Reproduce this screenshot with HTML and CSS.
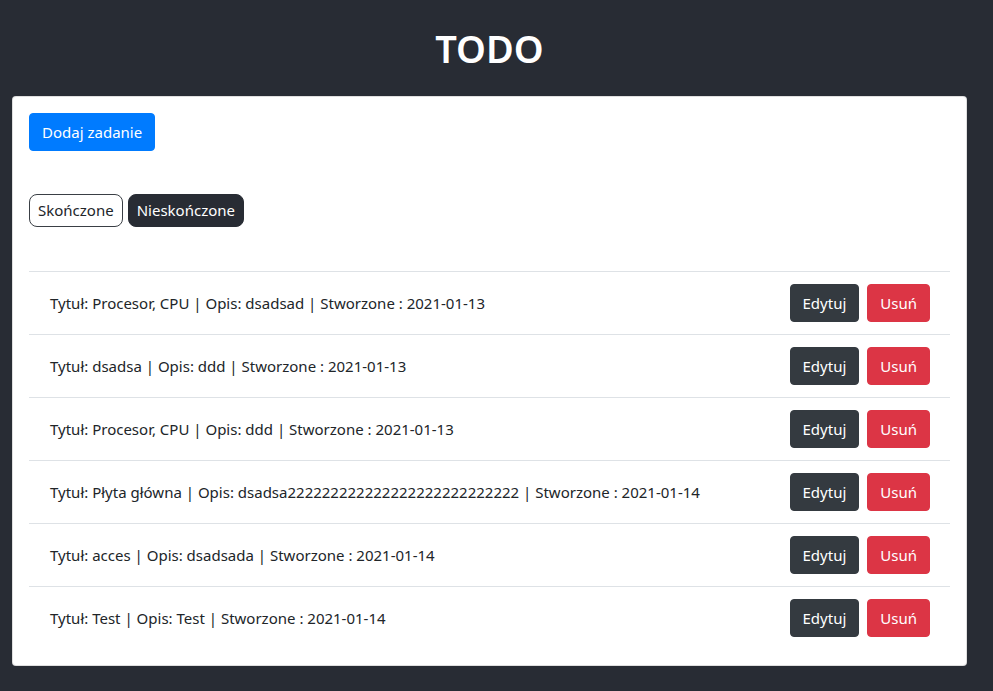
FILE: index.html
```html
<!DOCTYPE html>
<html lang="pl">
<head>
<meta charset="utf-8">
<title>TODO</title>
<link rel="stylesheet" href="styles.css">
</head>
<body>
<div class="app">
  <h1 class="title">TODO</h1>
  <div class="card">
    <div><button class="btn btn-primary">Dodaj zadanie</button></div>
    <div class="filters">
      <button class="pill pill-outline">Skończone</button>
      <button class="pill pill-dark">Nieskończone</button>
    </div>
    <ul class="list">
      <li class="row"><span class="text">Tytuł: Procesor, CPU | Opis: dsadsad | Stworzone : 2021-01-13</span><span class="actions"><button class="btn btn-dark">Edytuj</button><button class="btn btn-danger">Usuń</button></span></li>
      <li class="row"><span class="text">Tytuł: dsadsa | Opis: ddd | Stworzone : 2021-01-13</span><span class="actions"><button class="btn btn-dark">Edytuj</button><button class="btn btn-danger">Usuń</button></span></li>
      <li class="row"><span class="text">Tytuł: Procesor, CPU | Opis: ddd | Stworzone : 2021-01-13</span><span class="actions"><button class="btn btn-dark">Edytuj</button><button class="btn btn-danger">Usuń</button></span></li>
      <li class="row"><span class="text">Tytuł: Płyta główna | Opis: dsadsa222222222222222222222222222 | Stworzone : 2021-01-14</span><span class="actions"><button class="btn btn-dark">Edytuj</button><button class="btn btn-danger">Usuń</button></span></li>
      <li class="row"><span class="text">Tytuł: acces | Opis: dsadsada | Stworzone : 2021-01-14</span><span class="actions"><button class="btn btn-dark">Edytuj</button><button class="btn btn-danger">Usuń</button></span></li>
      <li class="row"><span class="text">Tytuł: Test | Opis: Test | Stworzone : 2021-01-14</span><span class="actions"><button class="btn btn-dark">Edytuj</button><button class="btn btn-danger">Usuń</button></span></li>
    </ul>
  </div>
</div>
</body>
</html>
```
FILE: styles.css
```css
* { box-sizing: border-box; }
html, body { margin: 0; padding: 0; }
body {
  background: #282c34;
  font-family: "Noto Sans", "Open Sans", sans-serif;
  font-size: 15px;
  color: #212529;
}
.app {
  padding: 0 26px 25px 12px;
}
.title {
  margin: 0;
  padding: 24px 0;
  height: 96px;
  text-align: center;
  color: #fff;
  font-size: 38px;
  line-height: 48px;
  font-weight: 600;
}
.card {
  background: #fff;
  border: 1px solid rgba(0,0,0,.125);
  border-radius: 4px;
  padding: 16px;
}
.btn {
  font-family: inherit;
  font-size: 15px;
  line-height: 24px;
  padding: 6px 12px;
  border: 1px solid transparent;
  border-radius: 4px;
  color: #fff;
  cursor: pointer;
}
.btn-primary { background: #007bff; border-color: #007bff; }
.btn-dark { background: #343a40; border-color: #343a40; }
.btn-danger { background: #dc3545; border-color: #dc3545; }
.filters {
  display: flex;
  gap: 5px;
  margin-top: 43px;
}
.pill {
  font-family: inherit;
  font-size: 15px;
  line-height: 23px;
  padding: 4px 8px;
  border-radius: 8px;
  border: 1px solid #343a40;
}
.pill-outline { background: #fff; color: #212529; border-color: #3a3f45; }
.pill-dark { background: #282c34; color: #fff; border-color: #282c34; }
.list {
  list-style: none;
  margin: 44px 0 0;
  padding: 0;
}
.row {
  display: flex;
  align-items: center;
  justify-content: space-between;
  border-top: 1px solid #dee2e6;
  padding: 12px 20px 12px 21px;
}
.actions {
  display: flex;
  gap: 8px;
}
.actions .btn { height: 38px; }
```
